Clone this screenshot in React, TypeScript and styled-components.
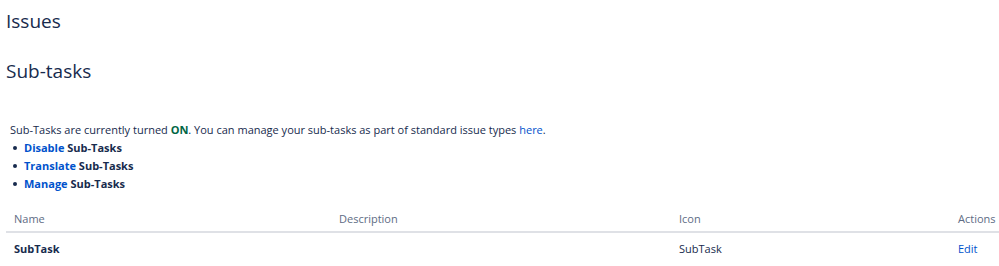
import styled, { createGlobalStyle } from 'styled-components';

const GlobalStyle = createGlobalStyle`
    html, body {
        margin: 0;
        padding: 0;
        background: #ffffff;
    }
    body {
        font-family: 'Open Sans', 'Noto Sans', sans-serif;
        color: #172b4d;
    }
`;

const Page = styled.div`
    width: 999px;
    height: 266px;
    overflow: hidden;
    padding: 0 0 0 6px;
    box-sizing: border-box;
`;

const PageTitle = styled.h1`
    font-size: 19px;
    font-weight: 400;
    line-height: 24px;
    margin: 9px 0 0 0;
`;

const SectionTitle = styled.h2`
    font-size: 19px;
    font-weight: 400;
    line-height: 24px;
    margin: 26px 0 0 0;
`;

const Intro = styled.p`
    font-size: 11px;
    line-height: 18px;
    margin: 38px 0 0 4px;
`;

const Link = styled.a<{ $bold?: boolean }>`
    color: #0052cc;
    text-decoration: none;
    font-weight: ${(props) => (props.$bold ? 700 : 400)};
`;

const On = styled.strong`
    color: #006644;
`;

const Options = styled.ul`
    list-style: none;
    margin: 0;
    padding: 0 0 0 7px;
    font-size: 11px;
    line-height: 18px;
    font-weight: 700;
`;

const Option = styled.li`
    &::before {
        content: '';
        display: inline-block;
        vertical-align: middle;
        width: 4px;
        height: 4px;
        border-radius: 50%;
        background: #172b4d;
        margin: -2px 7px 0 0;
    }
`;

const Table = styled.table`
    width: 993px;
    table-layout: fixed;
    border-collapse: collapse;
    margin-top: 14px;
    font-size: 11px;
`;

const HeadCell = styled.th`
    text-align: left;
    font-weight: 400;
    color: #5e6c84;
    padding: 3px 4px 3px 8px;
    border-bottom: 2px solid #dfe1e6;
    line-height: 18px;
    white-space: nowrap;
`;

const Cell = styled.td<{ $bold?: boolean }>`
    text-align: left;
    font-weight: ${(props) => (props.$bold ? 700 : 400)};
    padding: 7px 4px 6px 8px;
    line-height: 18px;
    white-space: nowrap;
`;

const App = () => {
    return (
        <Page>
            <GlobalStyle />
            <PageTitle>Issues</PageTitle>
            <SectionTitle>Sub-tasks</SectionTitle>
            <Intro>
                Sub-Tasks are currently turned <On>ON</On>. You can manage your sub-tasks as part of
                standard issue types <Link href="#">here</Link>.
            </Intro>
            <Options>
                <Option><Link $bold href="#">Disable</Link> Sub-Tasks</Option>
                <Option><Link $bold href="#">Translate</Link> Sub-Tasks</Option>
                <Option><Link $bold href="#">Manage</Link> Sub-Tasks</Option>
            </Options>
            <Table>
                <colgroup>
                    <col style={{ width: '325px' }} />
                    <col style={{ width: '340px' }} />
                    <col style={{ width: '279px' }} />
                    <col />
                </colgroup>
                <thead>
                    <tr>
                        <HeadCell>Name</HeadCell>
                        <HeadCell>Description</HeadCell>
                        <HeadCell>Icon</HeadCell>
                        <HeadCell>Actions</HeadCell>
                    </tr>
                </thead>
                <tbody>
                    <tr>
                        <Cell $bold>SubTask</Cell>
                        <Cell></Cell>
                        <Cell>SubTask</Cell>
                        <Cell><Link href="#">Edit</Link></Cell>
                    </tr>
                </tbody>
            </Table>
        </Page>
    );
};

export default App;
